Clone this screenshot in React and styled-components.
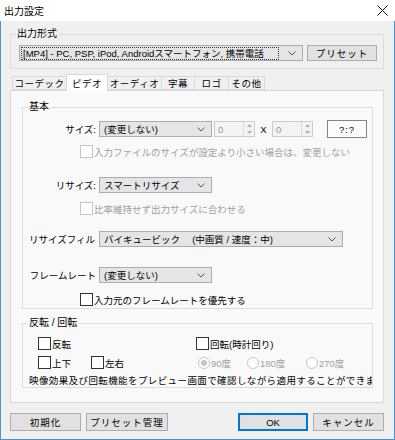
import React from "react";
import styled, { createGlobalStyle } from "styled-components";

const GlobalStyle = createGlobalStyle`
  body {
    margin: 0;
    background: #ffffff;
    font-family: "Liberation Sans", "Noto Sans CJK JP", sans-serif;
    font-size: 9.5px;
    color: #000;
  }
`;

const Window = styled.div`
  width: 395px;
  height: 440px;
  display: flex;
  flex-direction: column;
`;

const TitleBar = styled.div`
  height: 21px;
  flex-shrink: 0;
  background: #ffffff;
  display: flex;
  align-items: center;
  justify-content: space-between;
  padding: 0 7px 1px 4px;
  box-sizing: border-box;
  font-size: 10px;
`;

const Body = styled.div`
  flex: 1;
  background: #f0f0f0;
  border: 1px solid #4a93dd;
  border-top: none;
  padding: 0 10px 0 9px;
  display: flex;
  flex-direction: column;
`;

const Group = styled.div`
  position: relative;
  border: 1px solid #dcdcdc;
  box-sizing: border-box;
  margin-top: ${(p) => p.$mt || 0}px;
  height: ${(p) => p.$h}px;
  padding: ${(p) => p.$pad || "0"};
  display: flex;
  flex-direction: column;
`;

const Legend = styled.span`
  position: absolute;
  top: -7px;
  left: 5px;
  padding: 0 1px;
  line-height: 12px;
  font-size: 10px;
  background: ${(p) => p.$bg || "#f0f0f0"};
`;

const Line = styled.div`
  display: flex;
  align-items: center;
  margin-top: ${(p) => p.$mt || 0}px;
  height: ${(p) => p.$h || 16}px;
`;

const Combo = styled.div`
  width: ${(p) => p.$w}px;
  height: 16px;
  box-sizing: border-box;
  background: #e5e5e5;
  border: 1px solid #acacac;
  display: flex;
  align-items: center;
  padding: 0 6px 0 ${(p) => p.$pl || 4}px;
  justify-content: space-between;
  white-space: pre;
  flex-shrink: 0;
`;

const Focus = styled.span`
  flex: 1;
  margin-right: 10px;
  outline: 1px dotted #333;
  line-height: 11px;
  padding-left: 1px;
`;

const Button = styled.div`
  width: ${(p) => p.$w}px;
  height: ${(p) => p.$h || 16}px;
  margin-left: ${(p) => p.$ml || 0}px;
  box-sizing: border-box;
  background: ${(p) => (p.$light ? "#fbfbfb" : "#e1e1e1")};
  border: 1px solid ${(p) => (p.$primary ? "#0078d7" : p.$light ? "#858585" : "#adadad")};
  box-shadow: ${(p) => (p.$primary ? "inset 0 0 0 1px #0078d7" : "none")};
  display: flex;
  align-items: center;
  justify-content: center;
  flex-shrink: 0;
  white-space: nowrap;
  letter-spacing: ${(p) => p.$ls || 0}px;
`;

const TabStrip = styled.div`
  display: flex;
  align-items: flex-end;
  height: 16px;
  margin-top: 5px;
  padding-left: 2px;
  position: relative;
  z-index: 1;
`;

const Tab = styled.div`
  width: ${(p) => p.$w}px;
  height: ${(p) => (p.$active ? 17 : 14)}px;
  margin-bottom: ${(p) => (p.$active ? -1 : 0)}px;
  margin-right: -1px;
  box-sizing: border-box;
  border: 1px solid #d9d9d9;
  border-bottom: ${(p) => (p.$active ? "none" : "1px solid #d9d9d9")};
  background: ${(p) => (p.$active ? "#ffffff" : "#f0f0f0")};
  display: flex;
  align-items: center;
  justify-content: center;
  white-space: nowrap;
  letter-spacing: 0.5px;
`;

const Panel = styled.div`
  height: 313px;
  box-sizing: border-box;
  background: #f9f9f9;
  border: 1px solid #d9d9d9;
  padding: 0 10px 0 11px;
  display: flex;
  flex-direction: column;
`;

const Label = styled.div`
  width: 73px;
  margin-right: 3px;
  text-align: right;
  flex-shrink: 0;
  white-space: nowrap;
  ${(p) =>
    p.$clip &&
    `white-space: normal; height: 18px; line-height: 15px; overflow: hidden; text-align: left; padding: 2px 0 0 6px; box-sizing: border-box;`}
`;

const Spin = styled.div`
  width: 41px;
  height: 16px;
  margin-left: ${(p) => p.$ml || 0}px;
  box-sizing: border-box;
  border: 1px solid #cccccc;
  background: #f3f3f3;
  color: #9a9a9a;
  display: flex;
  align-items: center;
  padding-left: 3px;
  justify-content: space-between;
`;

const SpinArrows = styled.div`
  width: 10px;
  height: 14px;
  border-left: 1px solid #dadada;
  display: flex;
  flex-direction: column;
`;

const Times = styled.span`
  width: 17px;
  text-align: center;
`;

const Check = styled.label`
  display: flex;
  align-items: center;
  width: ${(p) => (p.$w ? `${p.$w}px` : "auto")};
  margin-left: ${(p) => p.$ml || 0}px;
  color: ${(p) => (p.$disabled ? "#a0a0a0" : "#000")};
  flex-shrink: 0;
  white-space: nowrap;
`;

const Box = styled.span`
  width: 13px;
  height: 13px;
  box-sizing: border-box;
  border: 1px solid ${(p) => (p.$disabled ? "#c6c6c6" : "#333333")};
  background: #ffffff;
  margin-right: 1px;
  flex-shrink: 0;
`;

const Radio = styled.span`
  width: 12px;
  height: 12px;
  box-sizing: border-box;
  border-radius: 50%;
  border: 1px solid #c6c6c6;
  background: #ffffff;
  margin-right: 1px;
  display: flex;
  align-items: center;
  justify-content: center;
  &::after {
    content: "";
    width: 6px;
    height: 6px;
    border-radius: 50%;
    background: ${(p) => (p.$on ? "#c6c6c6" : "transparent")};
  }
`;

const Note = styled.div`
  margin: 6px 0 0 6px;
  line-height: 12px;
  white-space: nowrap;
  overflow: hidden;
  letter-spacing: 0.4px;
`;

const Footer = styled.div`
  display: flex;
  margin-top: 10px;
`;

const Chevron = () => (
  <svg width="8" height="5" viewBox="0 0 8 5">
    <path d="M0.5 0.5 L4 4 L7.5 0.5" fill="none" stroke="#555" strokeWidth="1" />
  </svg>
);

const Tri = ({ up }) => (
  <svg width="9" height="7" viewBox="0 0 9 7" style={{ margin: "auto" }}>
    <path d={up ? "M2 5 L4.5 2 L7 5 Z" : "M2 2 L4.5 5 L7 2 Z"} fill="#b0b0b0" />
  </svg>
);

const Close = () => (
  <svg width="11" height="11" viewBox="0 0 11 11">
    <path d="M0.5 0.5 L10.5 10.5 M10.5 0.5 L0.5 10.5" stroke="#111" strokeWidth="1" />
  </svg>
);

const tabs = [
  ["コーデック", 55],
  ["ビデオ", 42],
  ["オーディオ", 55],
  ["字幕", 34],
  ["ロゴ", 35],
  ["その他", 37],
];

const SpinBox = ({ ml }) => (
  <Spin $ml={ml}>
    0
    <SpinArrows>
      <Tri up />
      <Tri />
    </SpinArrows>
  </Spin>
);

export default function App() {
  return (
    <>
      <GlobalStyle />
      <Window>
        <TitleBar>
          <span>出力設定</span>
          <Close />
        </TitleBar>
        <Body>
          <Group $mt={13} $h={35} $pad="10px 0 0 8px">
            <Legend>出力形式</Legend>
            <Line>
              <Combo $w={284} $pl={2}>
                <Focus>[MP4] - PC, PSP, iPod, Androidスマートフォン, 携帯電話</Focus>
                <Chevron />
              </Combo>
              <Button $w={70} $ml={4} $ls={1}>
                プリセット
              </Button>
            </Line>
          </Group>

          <TabStrip>
            {tabs.map(([t, w]) => (
              <Tab key={t} $w={w} $active={t === "ビデオ"}>
                {t}
              </Tab>
            ))}
          </TabStrip>
          <Panel>
            <Group $mt={16} $h={202} $pad="0">
              <Legend $bg="#f9f9f9">基本</Legend>
              <Line $mt={13}>
                <Label>サイズ:</Label>
                <Combo $w={113}>
                  <span>(変更しない)</span>
                  <Chevron />
                </Combo>
                <SpinBox ml={2} />
                <Times>X</Times>
                <SpinBox />
                <Button $w={40} $h={18} $ml={14} $light $ls={1}>
                  ?:?
                </Button>
              </Line>
              <Line $mt={8} $h={13}>
                <Check $ml={57} $disabled>
                  <Box $disabled />
                  入力ファイルのサイズが設定より小さい場合は、変更しない
                </Check>
              </Line>
              <Line $mt={19}>
                <Label>リサイズ:</Label>
                <Combo $w={113}>
                  <span>スマートリサイズ</span>
                  <Chevron />
                </Combo>
              </Line>
              <Line $mt={9} $h={13}>
                <Check $ml={57} $disabled>
                  <Box $disabled />
                  比率維持せず出力サイズに合わせる
                </Check>
              </Line>
              <Line $mt={16}>
                <Label $clip>リサイズフィルター</Label>
                <Combo $w={244}>
                  <span>バイキュービック　 (中画質 / 速度：中)</span>
                  <Chevron />
                </Combo>
              </Line>
              <Line $mt={20}>
                <Label>フレームレート</Label>
                <Combo $w={113}>
                  <span>(変更しない)</span>
                  <Chevron />
                </Combo>
              </Line>
              <Line $mt={10} $h={13}>
                <Check $ml={57}>
                  <Box />
                  入力元のフレームレートを優先する
                </Check>
              </Line>
            </Group>

            <Group $mt={14} $h={65} $pad="0">
              <Legend $bg="#f9f9f9">反転 / 回転</Legend>
              <Line $mt={13} $h={13}>
                <Check $ml={15} $w={158}>
                  <Box />
                  反転
                </Check>
                <Check>
                  <Box />
                  回転(時計回り)
                </Check>
              </Line>
              <Line $mt={6} $h={13}>
                <Check $ml={15} $w={53}>
                  <Box />
                  上下
                </Check>
                <Check $w={107}>
                  <Box />
                  左右
                </Check>
                <Check $w={49} $disabled>
                  <Radio $on />
                  90度
                </Check>
                <Check $w={59} $disabled>
                  <Radio />
                  180度
                </Check>
                <Check $disabled>
                  <Radio />
                  270度
                </Check>
              </Line>
              <Note>映像効果及び回転機能をプレビュー画面で確認しながら適用することができます。</Note>
            </Group>
          </Panel>

          <Footer>
            <Button $w={71} $h={18} $ls={1}>初期化</Button>
            <Button $w={82} $h={18} $ml={5} $ls={1}>プリセット管理</Button>
            <Button $w={70} $h={18} $ml={70} $primary>OK</Button>
            <Button $w={71} $h={18} $ml={5} $ls={1}>キャンセル</Button>
          </Footer>
        </Body>
      </Window>
    </>
  );
}
